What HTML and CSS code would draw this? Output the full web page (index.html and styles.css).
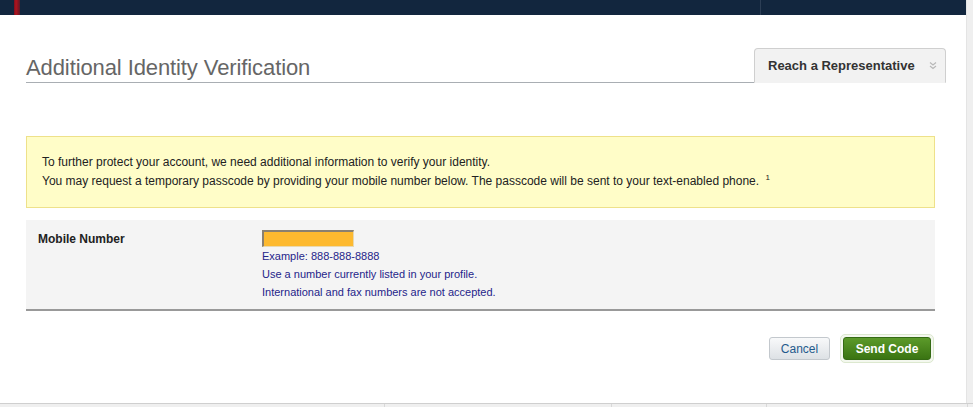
FILE: index.html
```html
<!DOCTYPE html>
<html>
<head>
<meta charset="utf-8">
<link rel="stylesheet" href="styles.css">
</head>
<body>
<div class="frame">
  <div class="page">
    <div class="topbar">
      <span class="stripe"></span>
      <span class="topdiv"></span>
    </div>
    <div class="content">
      <div class="head">
        <h1 class="title">Additional Identity Verification</h1>
        <div class="rep">Reach a Representative <span class="chev">
          <svg width="8" height="9" viewBox="0 0 8 9"><path d="M1 1.5 L4 4 L7 1.5 M1 5 L4 7.5 L7 5" fill="none" stroke="#b8b8b8" stroke-width="1.2"/></svg>
        </span></div>
      </div>
      <div class="notice">
        <p>To further protect your account, we need additional information to verify your identity.</p>
        <p>You may request a temporary passcode by providing your mobile number below. The passcode will be sent to your text-enabled phone. <sup>1</sup></p>
      </div>
      <div class="form">
        <div class="label">Mobile Number</div>
        <div class="field">
          <div class="input"></div>
          <div class="help">Example: 888-888-8888</div>
          <div class="help">Use a number currently listed in your profile.</div>
          <div class="help">International and fax numbers are not accepted.</div>
        </div>
      </div>
      <div class="actions">
        <button class="btn cancel">Cancel</button>
        <span class="ring"><button class="btn send">Send Code</button></span>
      </div>
    </div>
  </div>
  <div class="sidebar"></div>
</div>
<div class="footer">
  <span class="fcell c1"></span><span class="fcell c2"></span><span class="fcell c3"></span><span class="fcell c4"></span>
</div>
</body>
</html>
```
FILE: styles.css
```css
html, body { margin: 0; padding: 0; }
body { background: #fff; font-family: Arial, "Liberation Sans", sans-serif; width: 973px; height: 407px; overflow: hidden; }
.frame { display: flex; height: 403px; }
.page { width: 966px; background: #fff; display: flex; flex-direction: column; }
.sidebar { flex: 1; background: #efefef; border-left: 1px solid #e4e4e4; }
.topbar { height: 15px; background: #12263e; position: relative; }
.stripe { position: absolute; left: 14px; top: 0; width: 6px; height: 15px; background: linear-gradient(90deg, #7a1020 0, #b0141e 2px, #8a1422 4px, #5a1a2a 6px); }
.topdiv { position: absolute; left: 760px; top: 0; width: 1px; height: 15px; background: #2c3e55; }
.content { padding: 0 31px 0 26px; }
.head { display: flex; align-items: flex-end; margin-top: 33px; border-bottom: 1px solid #a9aeb3; height: 34px; margin-right: -11px; }
.title { flex: 1; margin: 0; font-weight: normal; font-size: 22px; color: #666; line-height: 26px; padding-bottom: 1px; letter-spacing: -0.1px; }
.rep { width: 192px; box-sizing: border-box; background: #f2f2f2; border: 1px solid #cfcfcf; border-radius: 4px 4px 0 0; font-weight: bold; font-size: 13px; color: #333; display: flex; align-items: center; padding-left: 13px; margin-bottom: -1px; height: 35px; border-bottom: 1px solid #f2f2f2; }
.chev { margin-left: 14px; display: inline-flex; }
.notice { margin-top: 53px; background: #fffdc8; border: 1px solid #eee18a; padding: 16px 0 0 15px; box-sizing: border-box; height: 72px; font-size: 12px; color: #222; }
.notice p { margin: 0; line-height: 19px; }
.notice sup { font-size: 8px; vertical-align: 5px; line-height: 0; margin-left: 3px; }
.form { margin-top: 12px; background: #f4f4f4; border-bottom: 2px solid #999; height: 91px; box-sizing: border-box; display: flex; padding: 10px 0 0 12px; }
.label { width: 224px; font-weight: bold; font-size: 12px; color: #222; padding-top: 2px; }
.field { display: flex; flex-direction: column; }
.input { background: #fdb92f; border-top: 2px solid #8a8070; border-left: 2px solid #8a8070; border-right: 1px solid #e8d8b0; border-bottom: 1px solid #e8d8b0; box-sizing: border-box; width: 92px; height: 17px; }
.help { font-size: 11px; color: #24248a; line-height: 18px; }
.help:first-of-type { line-height: 19px; }
.actions { display: flex; justify-content: flex-end; align-items: center; margin-top: 23px; padding-right: 1px; gap: 10px; }
.btn { font-family: Arial, "Liberation Sans", sans-serif; font-size: 12px; height: 23px; border-radius: 3px; padding: 0; cursor: pointer; }
.cancel { width: 61px; background: linear-gradient(#f8f9fa, #dde1e5); border: 1px solid #c3c8cd; color: #1f5a8c; }
.ring { display: inline-flex; padding: 2px; border: 1px solid #dce8cf; border-radius: 5px; background: #f4f8ef; }
.send { width: 88px; background: linear-gradient(#5c9a2a, #3a7412); border: 1px solid #356a14; color: #fff; font-weight: bold; }
.footer { height: 4px; background: #efefef; border-top: 1px solid #cfcfcf; display: flex; }
.fcell { border-right: 1px solid #d8d8d8; }
.c1 { width: 384px; } .c2 { width: 226px; } .c3 { width: 154px; } .c4 { width: 200px; }
```
